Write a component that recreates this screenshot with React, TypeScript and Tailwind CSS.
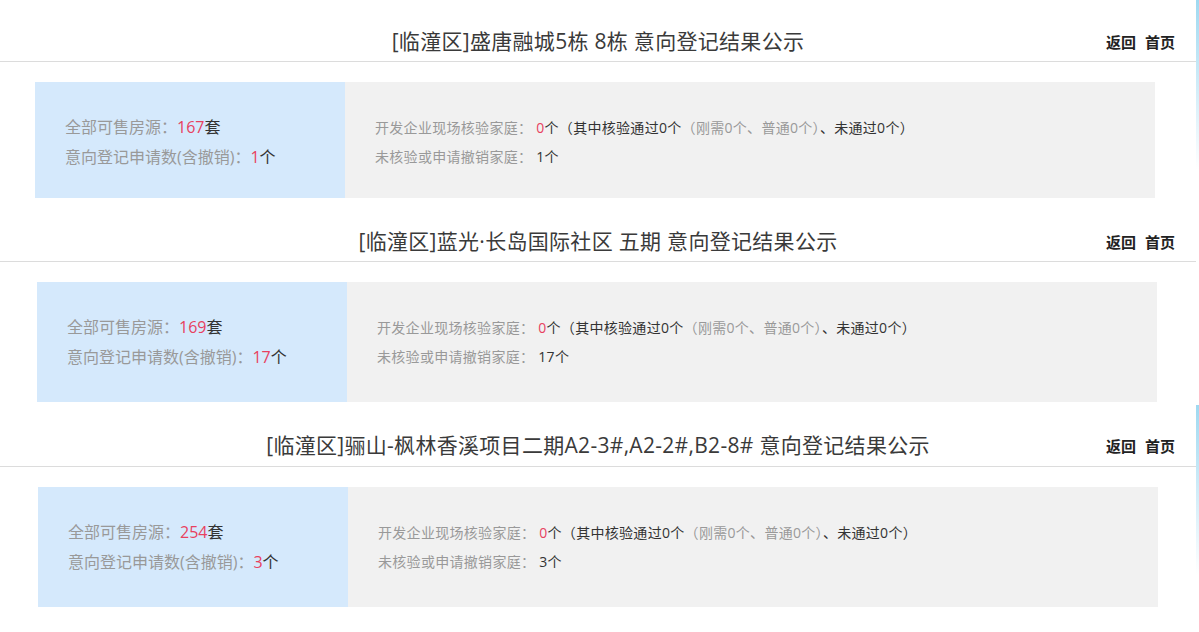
import React from 'react';

const font = { fontFamily: '"Open Sans", "Noto Sans CJK SC", "Noto Sans", sans-serif' };

interface Project {
  title: string;
  total: string;
  applied: string;
  cardLeft: string;
  cardHeight: string;
  headTop: string;
  edge: boolean;
  sectionHeight: string;
}

const PROJECTS: Project[] = [
  {
    title: '[临潼区]盛唐融城5栋 8栋 意向登记结果公示',
    total: '167',
    applied: '1',
    cardLeft: 'ml-[35px]',
    cardHeight: 'h-[116px]',
    headTop: 'pt-[26px]',
    edge: true,
    sectionHeight: 'h-[200px]',
  },
  {
    title: '[临潼区]蓝光·长岛国际社区 五期 意向登记结果公示',
    total: '169',
    applied: '17',
    cardLeft: 'ml-[37px]',
    cardHeight: 'h-[120px]',
    headTop: 'pt-[26px]',
    edge: false,
    sectionHeight: 'h-[205px]',
  },
  {
    title: '[临潼区]骊山-枫林香溪项目二期A2-3#,A2-2#,B2-8# 意向登记结果公示',
    total: '254',
    applied: '3',
    cardLeft: 'ml-[38px]',
    cardHeight: 'h-[120px]',
    headTop: 'pt-[25px]',
    edge: true,
    sectionHeight: 'h-[227px]',
  },
];

const Section: React.FC<{ p: Project }> = ({ p }) => (
  <div className={`flex ${p.sectionHeight}`}>
    <div className="w-[1196px]">
      <div className={`grid grid-cols-[1fr_auto_1fr] items-start h-[62px] border-b border-[#dcdcdc] ${p.headTop}`}>
        <div />
        <h1 className="text-[21px] leading-[30px] tracking-[0.3px] text-[#3a3a3a] font-normal whitespace-nowrap">{p.title}</h1>
        <div className="flex justify-end gap-[9px] pr-[21px] text-[15px] leading-[32px] font-bold text-[#222]">
          <a>返回</a>
          <a>首页</a>
        </div>
      </div>
      <div className={`mt-[20px] ${p.cardLeft} w-[1120px] ${p.cardHeight} flex`}>
        <div className="w-[310px] bg-[#d5e9fc] pl-[30px] pt-[30px] text-[16px] leading-[30px] text-[#999]">
          <p>
            全部可售房源：<span className="text-[#e8415f]">{p.total}</span>
            <span className="text-[#333]">套</span>
          </p>
          <p>
            意向登记申请数(含撤销)：<span className="text-[#e8415f]">{p.applied}</span>
            <span className="text-[#333]">个</span>
          </p>
        </div>
        <div className="flex-1 bg-[#f1f1f1] pl-[30px] pt-[31px] text-[14px] leading-[29px] tracking-[0.3px] text-[#999]">
          <p>
            开发企业现场核验家庭：&nbsp;<span className="text-[#e8415f]">0</span>
            <span className="text-[#333]">个（其中核验通过0个</span>
            （刚需0个、普通0个）
            <span className="text-[#333]">、未通过0个）</span>
          </p>
          <p>
            未核验或申请撤销家庭：&nbsp;<span className="text-[#333]">{p.applied}个</span>
          </p>
        </div>
      </div>
    </div>
    {p.edge ? (
      <div className="w-[3px] h-[170px] bg-gradient-to-b from-[#9fd9f1] to-white" />
    ) : (
      <div className="w-[3px]" />
    )}
  </div>
);

export default function App() {
  return (
    <div className="w-[1199px] bg-white" style={font}>
      {PROJECTS.map((p) => (
        <Section key={p.title} p={p} />
      ))}
    </div>
  );
}
